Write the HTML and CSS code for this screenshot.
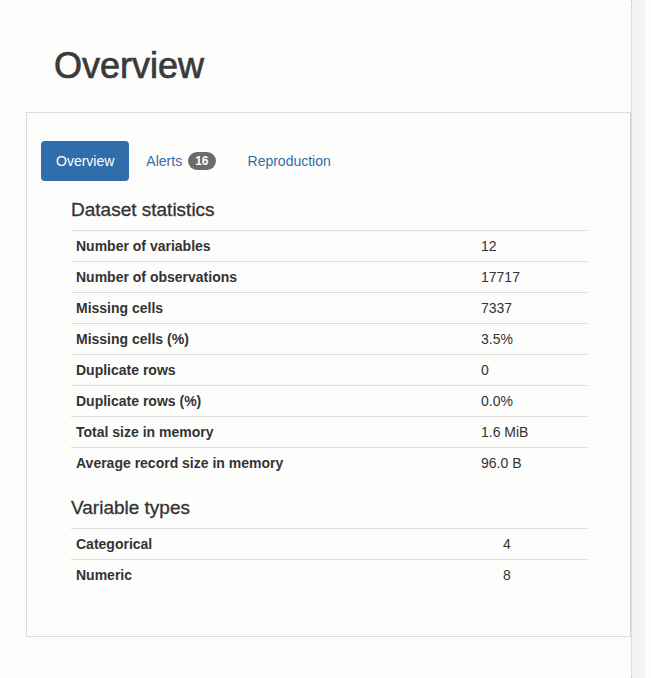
FILE: index.html
```html
<!DOCTYPE html>
<html lang="en">
<head>
<meta charset="utf-8">
<title>Overview</title>
<link rel="stylesheet" href="styles.css">
</head>
<body>
<div class="page">
  <main class="main">
    <h1 class="title">Overview</h1>
    <section class="panel">
      <ul class="tabs">
        <li class="tab"><a class="tab-link active" href="#overview">Overview</a></li>
        <li class="tab"><a class="tab-link" href="#alerts">Alerts <span class="badge">16</span></a></li>
        <li class="tab"><a class="tab-link" href="#reproduction">Reproduction</a></li>
      </ul>
      <div class="content">
        <h4 class="section-title">Dataset statistics</h4>
        <table class="stats">
          <tbody>
            <tr><th class="label">Number of variables</th><td class="value">12</td></tr>
            <tr><th class="label">Number of observations</th><td class="value">17717</td></tr>
            <tr><th class="label">Missing cells</th><td class="value">7337</td></tr>
            <tr><th class="label">Missing cells (%)</th><td class="value">3.5%</td></tr>
            <tr><th class="label">Duplicate rows</th><td class="value">0</td></tr>
            <tr><th class="label">Duplicate rows (%)</th><td class="value">0.0%</td></tr>
            <tr><th class="label">Total size in memory</th><td class="value">1.6 MiB</td></tr>
            <tr><th class="label">Average record size in memory</th><td class="value">96.0 B</td></tr>
          </tbody>
        </table>
        <h4 class="section-title">Variable types</h4>
        <table class="stats types">
          <tbody>
            <tr><th class="label">Categorical</th><td class="value">4</td></tr>
            <tr><th class="label">Numeric</th><td class="value">8</td></tr>
          </tbody>
        </table>
      </div>
    </section>
  </main>
  <div class="scrollbar"></div>
</div>
</body>
</html>
```

FILE: styles.css
```css
* {
  box-sizing: border-box;
}

html, body {
  margin: 0;
  padding: 0;
}

body {
  background: #fdfdfc;
  font-family: "Liberation Sans", Arial, Helvetica, sans-serif;
  font-size: 14px;
  color: #333333;
}

.page {
  display: flex;
  min-height: 678px;
}

.main {
  width: 631px;
  flex: none;
  padding-top: 46px;
}

.title {
  margin: 0 0 26px 54px;
  font-size: 36px;
  line-height: 40px;
  font-weight: normal;
  color: #3a3a3a;
  -webkit-text-stroke: 0.7px #3a3a3a;
}

.panel {
  margin-left: 26px;
  border: 1px solid #dcdcdc;
  border-right-color: #d4d4d4;
  padding: 28px 14px 26px;
  background: #fdfdfc;
}

.tabs {
  display: flex;
  gap: 2px;
  list-style: none;
  margin: 0;
  padding: 0;
}

.tab-link {
  display: flex;
  align-items: center;
  gap: 6px;
  padding: 10px 15px;
  line-height: 20px;
  border-radius: 4px;
  color: #2f6da6;
  text-decoration: none;
}

.tab-link.active {
  background: #2f6eab;
  color: #ffffff;
}

.badge {
  display: inline-block;
  padding: 3px 7px;
  font-size: 12px;
  font-weight: bold;
  line-height: 12px;
  color: #ffffff;
  background: #6b6b6b;
  border-radius: 10px;
}

.content {
  margin-top: 19px;
  padding: 0 29px 0 30px;
}

.section-title {
  margin: 0 0 10px;
  font-size: 19px;
  line-height: 20px;
  font-weight: normal;
  color: #333333;
  -webkit-text-stroke: 0.3px #333333;
}

.stats {
  width: 100%;
  border-collapse: collapse;
  margin-bottom: 20px;
}

.stats th,
.stats td {
  padding: 5px;
  line-height: 20px;
  border-top: 1px solid #dddddd;
  text-align: left;
  vertical-align: top;
  font-size: 14px;
  color: #333333;
}

.stats .label {
  font-weight: bold;
  width: 405px;
}

.types .label {
  width: 427px;
}

.scrollbar {
  width: 14px;
  flex: none;
  background: #f2f4f1;
  border-left: 1px dotted #c9c9c9;
}
```
